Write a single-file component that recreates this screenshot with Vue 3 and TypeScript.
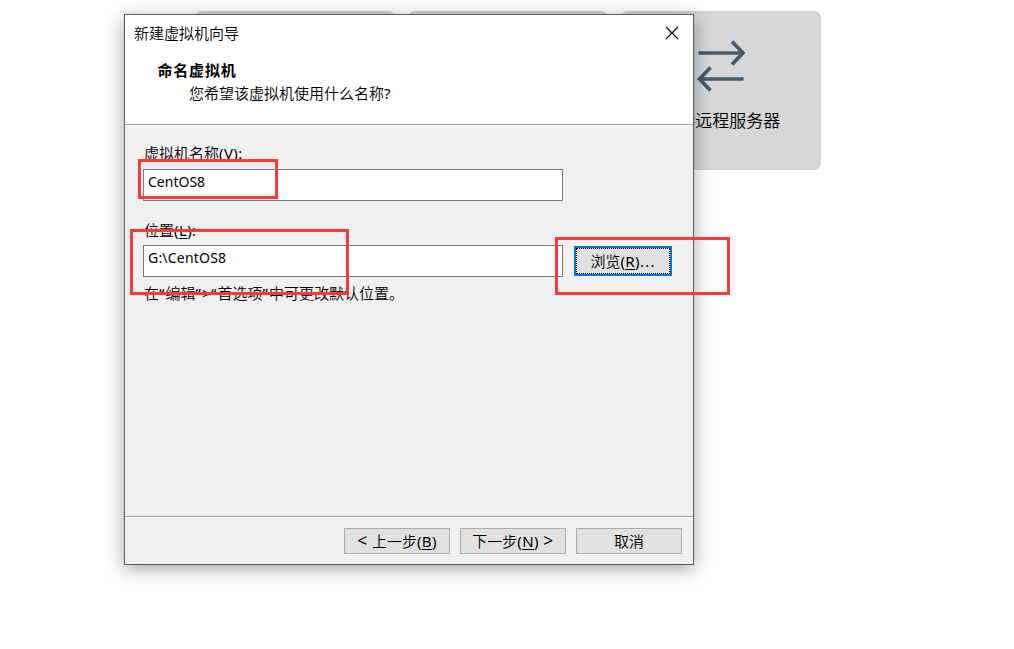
<script setup lang="ts">
import { ref } from 'vue'

interface Mark {
  id: string
}

const machineName = ref<string>('CentOS8')
const machinePath = ref<string>('G:\\CentOS8')
const marks: Mark[] = [{ id: 'name' }, { id: 'path' }, { id: 'browse' }]
</script>

<template>
  <div class="desktop">
    <div class="cards">
      <div class="card"></div>
      <div class="card"></div>
      <div class="card">
        <svg class="arrows" width="52" height="54" viewBox="0 0 52 54" fill="none" stroke="#485b69" stroke-width="3.7">
          <path d="M3.5 14H48M37 2.5L48 14L37 25.5" />
          <path d="M48.500 40H4M15.500 28.5L4.500 40L15.500 51.5" />
        </svg>
        <span class="card-label">连接远程服务器</span>
      </div>
    </div>

    <section class="dialog">
      <header class="head">
        <div class="titlebar">
          <span class="title">新建虚拟机向导</span>
          <svg class="close" width="14" height="14" viewBox="0 0 14 14" stroke="#000" stroke-width="1.1">
            <path d="M1 1L13 13M13 1L1 13" />
          </svg>
        </div>
        <h1 class="heading">命名虚拟机</h1>
        <p class="sub">您希望该虚拟机使用什么名称<span class="lat">?</span></p>
      </header>

      <main class="body">
        <label class="label">虚拟机名称<span class="lat">(<u>V</u>):</span></label>
        <div class="field"><span>{{ machineName }}</span></div>
        <label class="label second">位置<span class="lat">(<u>L</u>):</span></label>
        <div class="row">
          <div class="field wide"><span>{{ machinePath }}</span></div>
          <button class="browse"><span class="focus">浏览<span class="lat">(<u>R</u>)<span class="dots">...</span></span></span></button>
        </div>
        <p class="hint">在<span class="q">“</span>编辑<span class="q">”</span><span class="gt">&gt;</span><span class="q">“</span>首选项<span class="q">”</span>中可更改默认位置。</p>
      </main>

      <footer class="foot">
        <button class="btn"><span class="lat"><span class="arrow">&lt;</span>&nbsp;</span>上一步<span class="lat">(<u>B</u>)</span></button>
        <button class="btn">下一步<span class="lat">(<u>N</u>)&nbsp;<span class="arrow">&gt;</span></span></button>
        <button class="btn">取消</button>
      </footer>
    </section>

    <div v-for="m in marks" :key="m.id" class="mark" :class="`mark-${m.id}`"></div>
  </div>
</template>

<style>
body {
  margin: 0;
  background: #fff;
}
</style>

<style scoped>
* {
  box-sizing: border-box;
}
.desktop {
  position: relative;
  width: 1014px;
  height: 649px;
  overflow: hidden;
  background: #fff;
  color: #000;
  font: 400 15px/20px "Noto Sans CJK SC", sans-serif;
  font-weight: 350;
  white-space: nowrap;
}
.cards {
  display: flex;
  gap: 12.5px;
  padding: 11px 0 0 195px;
}
.card {
  display: flex;
  flex-direction: column;
  align-items: center;
  width: 200.3px;
  height: 159px;
  padding-top: 26px;
  border: 2px solid #d2d2d2;
  border-radius: 7px;
  background: #d7d7d7;
}
.arrows {
  display: block;
  flex: none;
  margin-left: 1px;
}
.card-label {
  margin-top: 15px;
  font-size: 17px;
  line-height: 24px;
}
.dialog {
  position: absolute;
  left: 124px;
  top: 14px;
  display: flex;
  flex-direction: column;
  width: 570px;
  height: 551px;
  border: 1px solid #5c5d5f;
  background: #f0f0f0;
  box-shadow: 0 4px 17px rgba(0, 0, 0, 0.36);
}
.head {
  height: 110px;
  border-bottom: 1px solid #a0a0a0;
  background: #fff;
}
.titlebar {
  display: flex;
  justify-content: space-between;
  height: 43px;
  padding: 8px 14px 0 9px;
}
.title {
  font-size: 15px;
}
.close {
  margin-top: 3px;
}
.heading {
  margin: 2px 0 0 32.5px;
  font-size: 15px;
  font-weight: 700;
  line-height: 20px;
  letter-spacing: 0.8px;
}
.sub {
  margin: 3px 0 0 64px;
}
.lat {
  font-family: "Noto Sans", sans-serif;
  font-size: 15px;
  font-weight: 400;
  letter-spacing: 0.4px;
}
u {
  text-underline-offset: 2px;
  text-decoration-thickness: 1px;
}
.body {
  display: flex;
  flex-direction: column;
  align-items: flex-start;
  height: 391px;
  padding: 17px 18px 0;
  border-top: 1px solid #fff;
}
.label {
  height: 26px;
  padding-left: 1px;
}
.second {
  height: 25px;
  margin-top: 19px;
}
.field {
  width: 420px;
  height: 32px;
  padding: 2px 4px;
  border: 1px solid #7a7a7a;
  background: #fff;
  font: 400 14px/20px "Noto Sans", sans-serif;
}
.wide {
  letter-spacing: 0.2px;
}
.row {
  display: flex;
  gap: 11px;
}
button {
  margin: 0;
  padding: 0;
  border-radius: 0;
  background: #e1e1e1;
  color: #000;
  font: inherit;
}
.browse {
  width: 98px;
  height: 30px;
  margin-top: 1px;
  border: 2px solid #0078d7;
}
.focus {
  display: block;
  height: 26px;
  border: 1px dotted #000;
  line-height: 24px;
}
.dots {
  letter-spacing: 1.2px;
}
.hint {
  margin: 6px 0 0 1px;
}
.q {
  display: inline-block;
  width: 6.5px;
  font-family: "Noto Sans", sans-serif;
  font-weight: 400;
}
.gt {
  display: inline-block;
  width: 9px;
  font-family: "Noto Sans", sans-serif;
  font-size: 15px;
  font-weight: 400;
}
.arrow {
  display: inline-block;
  font-size: 17.5px;
  line-height: 20px;
}
.foot {
  display: flex;
  flex: 1;
  justify-content: flex-end;
  gap: 10px;
  padding: 11px 11px 0 0;
  border-top: 1px solid #a0a0a0;
  box-shadow: inset 0 1px #fff;
}
.btn {
  width: 106px;
  height: 26px;
  border: 1px solid #adadad;
  line-height: 24px;
}
.mark {
  position: absolute;
  border: 3px solid #ff3939;
}
.mark-name {
  left: 138px;
  top: 159px;
  width: 140px;
  height: 40px;
}
.mark-path {
  left: 130px;
  top: 229px;
  width: 219px;
  height: 66px;
}
.mark-browse {
  left: 555px;
  top: 237px;
  width: 175px;
  height: 58px;
}
</style>
